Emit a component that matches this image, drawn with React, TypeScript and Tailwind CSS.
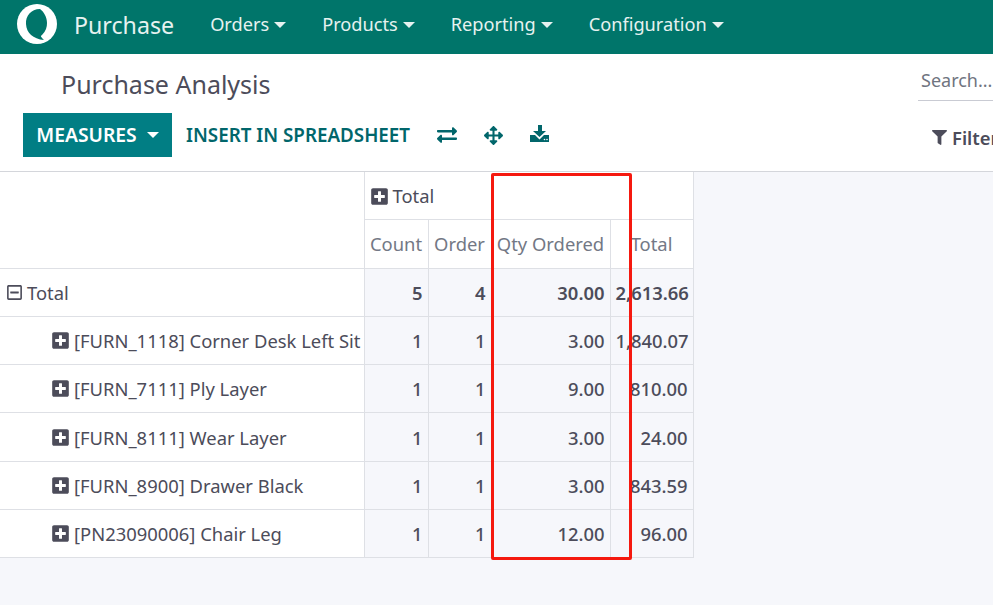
import { FaArrowsAlt, FaExchangeAlt, FaFilter, FaPlusSquare, FaRegMinusSquare } from 'react-icons/fa'

const rows = [
  { label: '[FURN_1118] Corner Desk Left Sit', count: 1, order: 1, qty: '3.00', total: '1,840.07', h: 'h-[48px]' },
  { label: '[FURN_7111] Ply Layer', count: 1, order: 1, qty: '9.00', total: '810.00', h: 'h-[48px]' },
  { label: '[FURN_8111] Wear Layer', count: 1, order: 1, qty: '3.00', total: '24.00', h: 'h-[49px]' },
  { label: '[FURN_8900] Drawer Black', count: 1, order: 1, qty: '3.00', total: '843.59', h: 'h-[48px]' },
  { label: '[PN23090006] Chair Leg', count: 1, order: 1, qty: '12.00', total: '96.00', h: 'h-[48px]' },
]

const navItems = ['Orders', 'Products', 'Reporting', 'Configuration']

function Caret({ className }: { className: string }) {
  return <span className={`inline-block border-x-[6px] border-t-[6px] border-x-transparent align-[3px] ${className}`} />
}

export default function App() {
  return (
    <div className="relative h-[605px] w-[993px] overflow-hidden bg-[#f6f7fb] font-['Noto_Sans',sans-serif] text-[18.4px] text-[#4c4c5a]">
      {/* ── Navbar ── */}
      <header className="flex h-[54px] items-center bg-[#00756a] pb-[4px] pl-[17px] text-[#e6f2f0]">
        <svg viewBox="0 0 40 40" className="mb-[2px] h-[40px] w-[40px] shrink-0">
          <circle cx="20" cy="20" r="20" fill="#ffffff" />
          <path d="M23 5 C14 5 8.500 12 9 20 C9.500 29 16 35 27 36 C24 33 23 32 25 31 C29 27 30 23 30 19 C30 13 27 8 23 5 Z" fill="#00756a" />
        </svg>
        <span className="ml-[17px] text-[23.200px]">Purchase</span>
        <nav className="ml-[36px] flex gap-[36px] text-[18.200px]">
          {navItems.map((item) => (
            <span key={item} className="whitespace-nowrap">{item}<Caret className="ml-[5px] border-t-[#e6f2f0]" /></span>
          ))}
        </nav>
      </header>

      {/* ── Control panel ── */}
      <div className="h-[118px] border-b border-[#d4d6db] bg-white">
        <div className="flex h-[59px] items-start justify-between">
          <h1 className="ml-[61px] mt-[11px] text-[25px] leading-[38px]">Purchase Analysis</h1>
          <div className="mt-[12px] h-[35px] w-[75px] border-b border-[#c9cbd3] pl-[3px] text-[18px] leading-[29px] text-[#6f7480]">Search...</div>
        </div>
        <div className="flex items-start justify-between">
          <div className="ml-[23px] flex items-center">
            <button className="flex h-[44px] w-[149px] items-center justify-center bg-[#017e84] text-[19.300px] font-semibold text-white">
              MEASURES<Caret className="ml-[10px] border-t-white" />
            </button>
            <span className="ml-[14px] text-[18.800px] font-semibold text-[#01666b]">INSERT IN SPREADSHEET</span>
            <FaExchangeAlt className="ml-[27px] h-[20px] w-[20px] text-[#01666b]" />
            <FaArrowsAlt className="ml-[27px] h-[19px] w-[19px] text-[#01666b]" />
            <svg viewBox="0 0 19 19" className="mb-[3px] ml-[27px] h-[19px] w-[19px] text-[#01666b]">
              <path d="M8 1 H12 V7 H16 L9.500 13 L3 7 H8 Z" fill="currentColor" />
              <path d="M0 11 H5 L9.500 15.500 L14 11 H19 V18 H0 Z" fill="currentColor" />
              <circle cx="14.500" cy="15.500" r="0.800" fill="#ffffff" />
              <circle cx="17" cy="15.500" r="0.800" fill="#ffffff" />
            </svg>
          </div>
          <div className="mt-[11px] flex w-[61px] items-center overflow-hidden font-semibold whitespace-nowrap">
            <FaFilter className="mr-[5px] h-[15px] w-[15px] shrink-0" />Filters
          </div>
        </div>
      </div>

      {/* ── Pivot table ── */}
      <table className="w-[693px] table-fixed border-collapse">
        <colgroup>
          <col className="w-[364px]" />
          <col className="w-[64px]" />
          <col className="w-[63px]" />
          <col className="w-[119px]" />
          <col className="w-[83px]" />
        </colgroup>
        <thead className="bg-white font-normal">
          <tr className="h-[47px]">
            <th rowSpan={2} className="border-r border-b border-[#dee0e5]" />
            <th colSpan={4} className="border-r border-b border-[#dee0e5] px-[5px] pt-[2px] text-left font-normal">
              <span className="flex items-center gap-[4px]"><FaPlusSquare className="h-[19px] w-[19px]" />Total</span>
            </th>
          </tr>
          <tr className="h-[49px] text-[#737885]">
            {['Count', 'Order', 'Qty Ordered', 'Total'].map((name) => (
              <th key={name} className="border-r border-b border-[#dee0e5] text-center font-normal whitespace-nowrap">{name}</th>
            ))}
          </tr>
        </thead>
        <tbody>
          <tr className="h-[48px] font-semibold">
            <td className="border-r border-b border-[#dee0e5] bg-white pt-[2px] pl-[6px] font-normal">
              <span className="flex items-center gap-[4px]"><FaRegMinusSquare className="h-[17px] w-[17px]" />Total</span>
            </td>
            {['5', '4', '30.00', '2,613.66'].map((v, i) => (
              <td key={i} className="border-r border-b border-[#dee0e5] px-[5px] pt-[2px] text-right">{v}</td>
            ))}
          </tr>
          {rows.map((row) => (
            <tr key={row.label} className={row.h}>
              <td className="border-r border-b border-[#dee0e5] bg-white pt-[2px] pl-[51px] whitespace-nowrap">
                <span className="flex items-center gap-[4px]"><FaPlusSquare className="h-[19px] w-[19px] shrink-0" />{row.label}</span>
              </td>
              {[row.count, row.order, row.qty, row.total].map((v, i) => (
                <td key={i} className="border-r border-b border-[#dee0e5] px-[5px] pt-[2px] text-right font-medium">{v}</td>
              ))}
            </tr>
          ))}
        </tbody>
      </table>

      {/* Red annotation drawn over the screenshot */}
      <div className="absolute top-[173px] left-[491px] h-[387px] w-[141px] rounded-[2px] border-[3px] border-[#f5190f]" />
    </div>
  )
}
